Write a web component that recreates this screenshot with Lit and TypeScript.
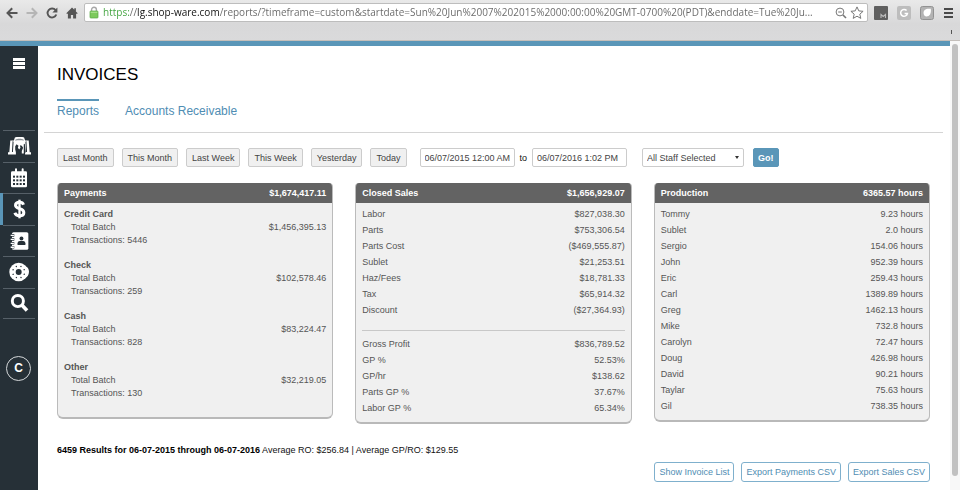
import { LitElement, html, css, svg, nothing } from "lit";
import { customElement } from "lit/decorators.js";
import { classMap } from "lit/directives/class-map.js";

const PAGE_URL =
  "https://lg.shop-ware.com/reports/?timeframe=custom&startdate=Sun%20Jun%2007%202015%2000:00:00%20GMT-0700%20(PDT)&enddate=Tue%20Ju...";

type Row = [string, string];

const payments: { name: string; total: string; count: number }[] = [
  { name: "Credit Card", total: "$1,456,395.13", count: 5446 },
  { name: "Check", total: "$102,578.46", count: 259 },
  { name: "Cash", total: "$83,224.47", count: 828 },
  { name: "Other", total: "$32,219.05", count: 130 },
];

const sales: Row[] = [
  ["Labor", "$827,038.30"],
  ["Parts", "$753,306.54"],
  ["Parts Cost", "($469,555.87)"],
  ["Sublet", "$21,253.51"],
  ["Haz/Fees", "$18,781.33"],
  ["Tax", "$65,914.32"],
  ["Discount", "($27,364.93)"],
];

const profit: Row[] = [
  ["Gross Profit", "$836,789.52"],
  ["GP %", "52.53%"],
  ["GP/hr", "$138.62"],
  ["Parts GP %", "37.67%"],
  ["Labor GP %", "65.34%"],
];

const production: Row[] = [
  ["Tommy", "9.23 hours"],
  ["Sublet", "2.0 hours"],
  ["Sergio", "154.06 hours"],
  ["John", "952.39 hours"],
  ["Eric", "259.43 hours"],
  ["Carl", "1389.89 hours"],
  ["Greg", "1462.13 hours"],
  ["Mike", "732.8 hours"],
  ["Carolyn", "72.47 hours"],
  ["Doug", "426.98 hours"],
  ["David", "90.21 hours"],
  ["Taylar", "75.63 hours"],
  ["Gil", "738.35 hours"],
];

@customElement("browser-bar")
export class BrowserBar extends LitElement {
  static styles = css`
    :host {
      display: block;
      height: 41px;
      box-sizing: border-box;
      border-bottom: 1px solid #c4bfbb;
      background: linear-gradient(#e9e9e9, #d8d8d9 24px, #dadadb);
      font-family: "Liberation Sans", Arial, sans-serif;
    }
    .row {
      display: flex;
      align-items: center;
      height: 25px;
      padding: 0 6px 0 5px;
    }
    button {
      display: grid;
      place-items: center;
      padding: 0;
      border: 0;
      background: none;
    }
    .nav {
      width: 14px;
      height: 14px;
      margin-right: 6px;
      color: #555;
    }
    .nav.off {
      color: #b5b5b5;
    }
    svg {
      display: block;
    }
    .address {
      flex: 1;
      display: flex;
      align-items: center;
      gap: 3px;
      min-width: 0;
      height: 19px;
      box-sizing: border-box;
      margin: 0 6px 0 -1px;
      padding: 0 3px 0 4px;
      border: 1px solid #bdbdbd;
      border-radius: 2px;
      background: #fff;
    }
    .url {
      flex: 1;
      min-width: 0;
      height: 17px;
      margin-left: 1px;
      padding: 0;
      border: 0;
      outline: 0;
      font: 10px/17px "Open Sans", "Liberation Sans", sans-serif;
      background: linear-gradient(
        90deg,
        #3ea23c 27px,
        #666 27px 34px,
        #111 34px 117px,
        #666 117px
      );
      -webkit-background-clip: text;
      background-clip: text;
      -webkit-text-fill-color: transparent;
    }
    .ext {
      width: 14px;
      height: 14px;
      margin-right: 9px;
    }
    .strip {
      display: flex;
      justify-content: flex-end;
      padding: 5px 8px 0 0;
    }
    .tick {
      width: 1px;
      height: 4px;
      background: #555;
    }
  `;

  render() {
    return html`
      <div class="row">
        <button class="nav" aria-label="Back">
          <svg width="12" height="12" viewBox="0 0 12 12" fill="none" stroke="currentColor" stroke-width="2">
            <path d="M11.5 6H2M6.2 1.2L1.5 6l4.7 4.8" />
          </svg>
        </button>
        <button class="nav off" aria-label="Forward">
          <svg width="12" height="12" viewBox="0 0 12 12" fill="none" stroke="currentColor" stroke-width="2">
            <path d="M.5 6H10M5.8 1.2L10.5 6l-4.7 4.8" />
          </svg>
        </button>
        <button class="nav" aria-label="Reload">
          <svg width="12" height="12" viewBox="0 0 12 12">
            <path d="M9.6 3.2A4.5 4.5 0 1 0 10.3 7.5" fill="none" stroke="currentColor" stroke-width="1.9" />
            <path d="M11.4.6v5H6.4z" fill="currentColor" />
          </svg>
        </button>
        <button class="nav" aria-label="Home">
          <svg width="12" height="12" viewBox="0 0 12 12" fill="currentColor">
            <path d="M6 .5l2.3 2.3V1.2h1.6v3.2l1.8 1.9-.8.8-.8-.6V11.6H7.1V8H4.9v3.6H1.9V6.5l-.8.6-.8-.8z" />
          </svg>
        </button>
        <div class="address">
          <svg width="10" height="13" viewBox="0 0 10 13">
            <path d="M2.6 6V3.6a2.4 2.4 0 0 1 4.8 0V6" fill="none" stroke="#a8a8a8" stroke-width="1.4" />
            <rect x="1" y="5" width="8" height="7" rx=".8" fill="#7cc95c" stroke="#58a844" stroke-width=".7" />
            <path d="M1.6 6.3h6.8" stroke="#b4e69b" stroke-width=".9" />
          </svg>
          <input class="url" type="text" aria-label="Address" spellcheck="false" .value=${PAGE_URL} />
          <svg width="12" height="12" viewBox="0 0 12 12" fill="none" stroke="#777">
            <circle cx="5" cy="5" r="3.9" />
            <path d="M3.2 5h3.6" />
            <path d="M8 8l3 3" stroke-width="1.6" />
          </svg>
          <svg width="14" height="13" viewBox="0 0 14 13" fill="none" stroke="#777">
            <path d="M7 .9l1.8 4 4.3.4-3.3 2.9 1 4.2L7 10.2l-3.8 2.2 1-4.2L.9 5.3l4.3-.4z" stroke-linejoin="round" />
          </svg>
        </div>
        <button class="ext" aria-label="Mail extension">
          <svg width="14" height="14" viewBox="0 0 14 14">
            <rect width="14" height="14" rx="1" fill="#5f5f5f" />
            <path d="M7 12V8.5l2.2 2 2.3-2V12" fill="none" stroke="#bbb" stroke-width="1.1" />
          </svg>
        </button>
        <button class="ext" aria-label="Grammar extension">
          <svg width="14" height="14" viewBox="0 0 14 14">
            <rect width="14" height="14" rx="2" fill="#bdbdbd" />
            <path d="M9.6 4.6A3.4 3.4 0 1 0 10.4 7.6H7.6" fill="none" stroke="#fff" stroke-width="1.5" />
          </svg>
        </button>
        <button class="ext" aria-label="Notes extension">
          <svg width="14" height="14" viewBox="0 0 14 14">
            <rect x=".5" y=".5" width="13" height="13" rx="2" fill="#b3b3b3" stroke="#929292" />
            <path d="M3.6 7.6C3.2 4 5.8 2.2 10.8 2.8 11.4 8 9.6 10.6 6 10.4 4.6 10.3 3.7 9.2 3.6 7.6z" fill="#fff" />
          </svg>
        </button>
        <button aria-label="Menu">
          <svg width="11" height="11" viewBox="0 0 11 11" fill="#4a4a4a">
            <path d="M1 1h9v2H1zM1 5h9v2H1zM1 9h9v2H1z" />
          </svg>
        </button>
      </div>
      <div class="strip"><span class="tick"></span></div>
    `;
  }
}

const garage = svg`
  <path d="M21 3C25 1 45 1 49 3L52 12H63L66 48H70V55H52V50L54 47L51 22L48 24V52H42V44L46 34L42 28L36 27L38 34L34 40L30 34L32 28L26 24L22 30V40L24 48V55H0V48H4L7 12H18Z" fill="#fff"/>
  <path d="M23 9C28 6 42 6 47 9L48 13C42 11 28 11 22 13Z" fill="#8b9196"/>
  <path d="M14 14L12 47H15L17 16ZM56 14L58 47H55L53 16Z" fill="#263037"/>`;

const calendar = svg`
  <path d="M8 10h6V4a3 3 0 0 1 6 0v6h14V4a3 3 0 0 1 6 0v6h6a4 4 0 0 1 4 4v40a4 4 0 0 1-4 4H6a4 4 0 0 1-4-4V14a4 4 0 0 1 4-4z" fill="#fff"/>
  <g fill="#263037">${[23, 34, 45].map((y) =>
    [8, 18, 28, 38].map((x) => svg`<rect x=${x} y=${y} width="6" height="6"/>`)
  )}</g>`;

const dollar = svg`
  <path d="M36 17C34 11 29 10 24 10C17 10 12 13 12 19C12 25 17 27 24 29C32 31 37 34 37 41C37 47 31 50 24 50C17 50 12 47 10 41" fill="none" stroke="#fff" stroke-width="9"/>
  <path d="M24 2V58" stroke="#fff" stroke-width="7"/>`;

const contacts = svg`
  <rect x="6" y="3" width="50" height="54" rx="5" fill="#fff"/>
  <path d="M0 13h13M0 25h13M0 37h13M0 49h13" stroke="#263037" stroke-width="8"/>
  <path d="M2 13h10M2 25h10M2 37h10M2 49h10" stroke="#fff" stroke-width="4"/>
  <circle cx="35" cy="22" r="6" fill="#263037"/>
  <path d="M23 42v-5c0-6 5-8 12-8s12 2 12 8v5z" fill="#263037"/>`;

const brake = svg`
  <circle cx="29" cy="30" r="28" fill="#fff"/>
  <path d="M45 13C53 12 60 19 60 29S54 46 47 48C54 38 54 22 45 13z" fill="#fff"/>
  <circle cx="29" cy="30" r="9" fill="#263037"/>
  <g fill="#263037">${[0, 45, 90, 135, 180, 225, 270, 315].map(
    (a) => svg`<circle cx="29" cy="12" r="2.2" transform=${`rotate(${a + 22} 29 30)`}/>`
  )}</g>`;

const search = svg`
  <circle cx="24" cy="24" r="17" fill="none" stroke="#fff" stroke-width="9"/>
  <path d="M36 36L52 53" stroke="#fff" stroke-width="11"/>`;

const navItems = [
  { label: "Shop", icon: garage, box: "0 0 70 58", w: 23 },
  { label: "Calendar", icon: calendar, box: "0 0 52 60", w: 18 },
  { label: "Invoices", icon: dollar, box: "0 0 48 60", w: 17, active: true },
  { label: "Contacts", icon: contacts, box: "0 0 58 60", w: 19 },
  { label: "Parts", icon: brake, box: "0 0 60 60", w: 20 },
  { label: "Search", icon: search, box: "0 0 58 60", w: 19 },
];

@customElement("side-nav")
export class SideNav extends LitElement {
  static styles = css`
    :host {
      display: flex;
      flex-direction: column;
      align-items: center;
      width: 38px;
      background: #263037;
      font-family: "Liberation Sans", Arial, sans-serif;
    }
    svg {
      display: block;
    }
    .menu {
      margin-top: 12px;
      padding: 0;
      border: 0;
      background: none;
    }
    nav {
      display: flex;
      flex-direction: column;
      width: 100%;
      height: 189px;
      margin: 61px 0 37px;
    }
    .item {
      flex: 1;
      display: grid;
      grid-template-columns: 3px 32px;
      border-right: 3px solid transparent;
    }
    .glyph {
      display: grid;
      place-items: center;
      border-top: 1px solid #566068;
    }
    .item:last-child .glyph {
      border-bottom: 1px solid #566068;
    }
    .active .mark {
      background: #5a96b8;
    }
    .user {
      width: 25px;
      height: 25px;
      padding: 0;
      margin-right: 1px;
      border: 1px solid #d5d8da;
      border-radius: 50%;
      background: none;
      color: #fff;
      font: bold 12px/23px "Liberation Sans", Arial, sans-serif;
    }
  `;

  render() {
    return html`
      <button class="menu" aria-label="Toggle menu">
        <svg width="12" height="11" viewBox="0 0 12 11" fill="#fff">
          <path d="M0 0h12v3H0zM0 4h12v3H0zM0 8h12v3H0z" />
        </svg>
      </button>
      <nav>
        ${navItems.map(
          (n) => html`
            <a href="#" class=${classMap({ item: true, active: !!n.active })} aria-label=${n.label}>
              <span class="mark"></span>
              <span class="glyph">
                <svg width=${n.w} height="20" viewBox=${n.box}>${n.icon}</svg>
              </span>
            </a>
          `
        )}
      </nav>
      <button class="user">C</button>
    `;
  }
}

@customElement("report-panel")
export class ReportPanel extends LitElement {
  static properties = {
    heading: { type: String },
    total: { type: String },
    groups: { attribute: false },
    batches: { attribute: false },
  };
  declare heading: string;
  declare total: string;
  declare groups?: Row[][];
  declare batches?: typeof payments;

  static styles = css`
    :host {
      display: block;
      box-sizing: border-box;
      border: 1px solid #bbb;
      border-top: 0;
      border-bottom: 2px solid #b9b9b9;
      border-radius: 4px 4px 6px 6px;
      background: #f0f0f0;
      color: #555;
      font: 9px/16px "Liberation Sans", Arial, sans-serif;
      overflow: hidden;
    }
    table {
      width: 100%;
      border-collapse: collapse;
    }
    th,
    td {
      padding: 0 6px;
      text-align: left;
      font-weight: normal;
    }
    td:last-child,
    thead th:last-child {
      text-align: right;
    }
    thead th {
      height: 20px;
      background: #636363;
      color: #fff;
      font-weight: bold;
    }
    tbody::before {
      content: "";
      display: block;
      height: 3px;
    }
    tbody.last::after {
      content: "";
      display: block;
      height: 6px;
    }
    .rule td {
      height: 15px;
    }
    hr {
      margin: 4px 0 0;
      border: 0;
      border-top: 1px solid #c8c8c8;
    }
    .batch {
      line-height: 13px;
    }
    .batch::before {
      height: 5px;
    }
    .batch ~ .batch::before {
      height: 12px;
    }
    .batch.last::after {
      height: 17px;
    }
    .batch .name {
      font-weight: bold;
    }
    .batch .sub {
      padding-left: 13px;
    }
  `;

  render() {
    const groups = this.groups ?? [];
    const batches = this.batches ?? [];
    return html`
      <table>
        <thead>
          <tr>
            <th scope="col">${this.heading}</th>
            <th scope="col">${this.total}</th>
          </tr>
        </thead>
        ${groups.map(
          (rows, i) => html`
            <tbody class=${classMap({ last: i === groups.length - 1 })}>
              ${i > 0 ? html`<tr class="rule"><td colspan="2"><hr /></td></tr>` : nothing}
              ${rows.map(([k, v]) => html`<tr><th scope="row">${k}</th><td>${v}</td></tr>`)}
            </tbody>
          `
        )}
        ${batches.map(
          (b, i) => html`
            <tbody class=${classMap({ batch: true, last: i === batches.length - 1 })}>
              <tr><th class="name" scope="rowgroup" colspan="2">${b.name}</th></tr>
              <tr><th class="sub" scope="row">Total Batch</th><td>${b.total}</td></tr>
              <tr><th class="sub" scope="row" colspan="2">Transactions: ${b.count}</th></tr>
            </tbody>
          `
        )}
      </table>
    `;
  }
}

@customElement("app-root")
export class AppRoot extends LitElement {
  static styles = css`
    :host {
      display: flex;
      flex-direction: column;
      min-height: 100vh;
      background: #fff;
      color: #111;
      font: 9px/12px "Liberation Sans", Arial, sans-serif;
    }
    .view {
      flex: 1;
      display: flex;
    }
    .page {
      flex: 1;
      min-width: 0;
      display: flex;
      flex-direction: column;
      border-top: 5px solid #5a96b8;
    }
    .body {
      flex: 1;
      display: flex;
    }
    main {
      flex: 1;
      min-width: 0;
      padding: 0 20px 7px 19px;
    }
    h1 {
      margin: 19px 0 14px;
      color: #000;
      font-size: 17px;
      line-height: 20px;
      font-weight: normal;
    }
    .tabs {
      display: flex;
      gap: 26px;
      margin: 0 -13px 0 -13px;
      padding: 0 13px 14px;
      border-bottom: 1px solid #d4d4d4;
    }
    .tab {
      padding-top: 3px;
      border-top: 2px solid transparent;
      color: #4f8db3;
      font-size: 12px;
      line-height: 14px;
      text-decoration: none;
    }
    .tab.current {
      border-color: #5a96b8;
    }
    .filters {
      display: flex;
      align-items: center;
      margin: 15px 0 16px;
    }
    button,
    input,
    select {
      box-sizing: border-box;
      height: 19px;
      margin: 0;
      border: 1px solid #ccc;
      border-radius: 2px;
      background: #fff;
      color: #444;
      font: 9px/16px "Liberation Sans", Arial, sans-serif;
    }
    .preset {
      margin-right: 8px;
      padding: 0 5px;
      background: #f0f0f0;
    }
    .date {
      width: 95px;
      padding: 0 4px;
    }
    .from {
      margin-left: 5px;
    }
    .to {
      margin: 0 5px;
      color: #111;
    }
    .staff {
      display: grid;
      align-items: center;
      width: 102px;
      margin: 0 9px 0 15px;
    }
    .staff select,
    .staff svg {
      grid-area: 1 / 1;
    }
    .staff select {
      appearance: none;
      width: 100%;
      padding: 0 4px;
    }
    .staff svg {
      justify-self: end;
      margin-right: 5px;
      pointer-events: none;
    }
    .go {
      padding: 0 4px;
      border-color: #5a96b8;
      background: #5a96b8;
      color: #fff;
      font-weight: bold;
    }
    .panels {
      display: grid;
      grid-template-columns: repeat(3, 1fr);
      gap: 22px;
      align-items: start;
    }
    .summary {
      margin: 20px 0 6px;
    }
    .summary strong {
      color: #000;
    }
    .actions {
      display: flex;
      justify-content: flex-end;
      gap: 7px;
    }
    .actions button {
      height: 20px;
      padding: 0 4px;
      border-color: #7fb0cd;
      border-radius: 3px;
      color: #4f8db3;
    }
    .track {
      display: flex;
      width: 10px;
      box-sizing: border-box;
      padding: 3px 2px 14px;
      background: #f8f8f8;
    }
    .thumb {
      flex: 1;
      border-radius: 3px;
      background: #c1c1c1;
    }
  `;

  render() {
    const presets = ["Last Month", "This Month", "Last Week", "This Week", "Yesterday", "Today"];
    return html`
      <browser-bar></browser-bar>
      <div class="view">
        <div class="page">
          <div class="body">
            <side-nav></side-nav>
            <main>
              <h1>INVOICES</h1>
              <nav class="tabs">
                <a class="tab current" href="#">Reports</a>
                <a class="tab" href="#">Accounts Receivable</a>
              </nav>
              <div class="filters">
                ${presets.map((p) => html`<button class="preset">${p}</button>`)}
                <input class="date from" id="from" type="text" aria-label="Start date" .value=${"06/07/2015 12:00 AM"} />
                <label class="to" for="until">to</label>
                <input class="date" id="until" type="text" .value=${"06/07/2016 1:02 PM"} />
                <div class="staff">
                  <select aria-label="Staff">
                    <option>All Staff Selected</option>
                  </select>
                  <svg width="4" height="3" viewBox="0 0 4 3" fill="#333"><path d="M0 0h4L2 3z" /></svg>
                </div>
                <button class="go">Go!</button>
              </div>
              <div class="panels">
                <report-panel heading="Payments" total="$1,674,417.11" .batches=${payments}></report-panel>
                <report-panel heading="Closed Sales" total="$1,656,929.07" .groups=${[sales, profit]}></report-panel>
                <report-panel heading="Production" total="6365.57 hours" .groups=${[production]}></report-panel>
              </div>
              <p class="summary">
                <strong>6459 Results for 06-07-2015 through 06-07-2016</strong>
                Average RO: $256.84 | Average GP/RO: $129.55
              </p>
              <div class="actions">
                <button>Show Invoice List</button>
                <button>Export Payments CSV</button>
                <button>Export Sales CSV</button>
              </div>
            </main>
          </div>
        </div>
        <div class="track"><div class="thumb"></div></div>
      </div>
    `;
  }
}
